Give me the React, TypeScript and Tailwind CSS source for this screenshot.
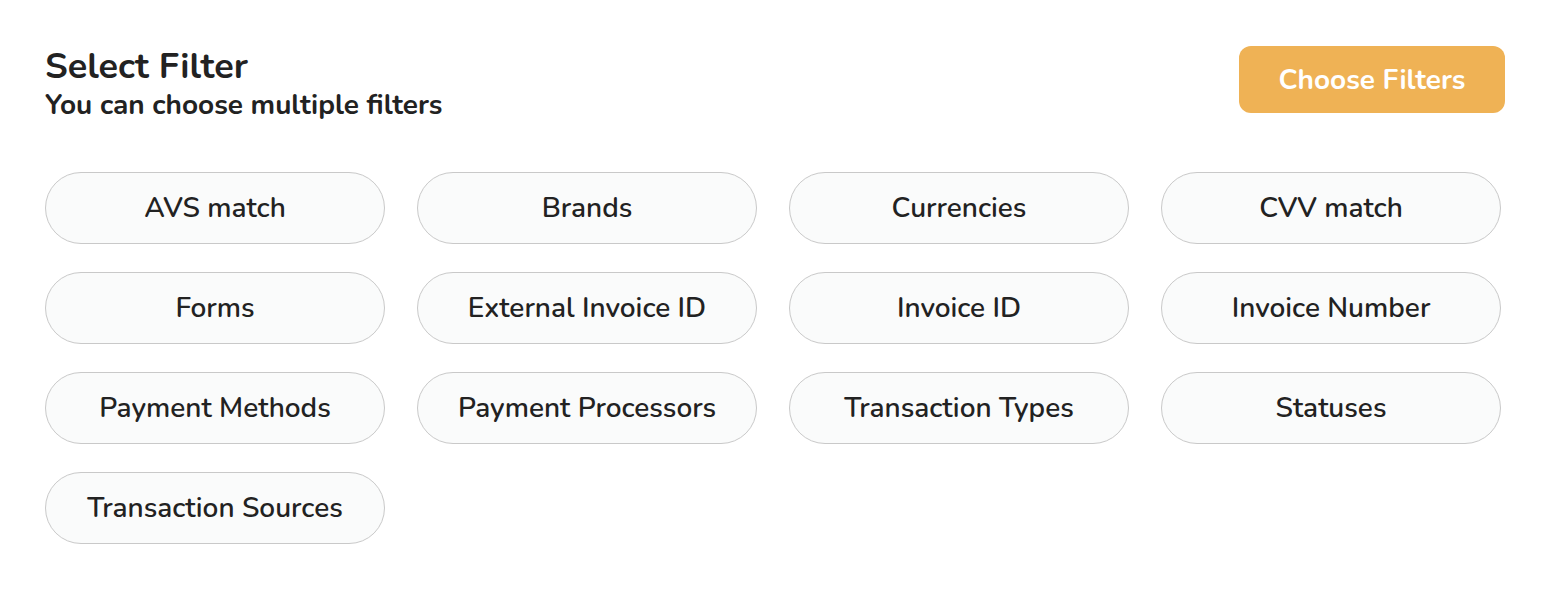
import React from "react";

const filters = [
  "AVS match",
  "Brands",
  "Currencies",
  "CVV match",
  "Forms",
  "External Invoice ID",
  "Invoice ID",
  "Invoice Number",
  "Payment Methods",
  "Payment Processors",
  "Transaction Types",
  "Statuses",
  "Transaction Sources",
];

export default function App() {
  return (
    <div
      className="w-[1552px] h-[592px] bg-white text-[#222222] pl-[45px] pr-[47px] pt-[46px]"
      style={{ fontFamily: "Nunito, Lato, 'Noto Sans', sans-serif" }}
    >
      <div className="flex items-start justify-between">
        <div className="flex flex-col">
          <h1 className="text-[36px] font-bold leading-[42px] text-[#222222]">Select Filter</h1>
          <p className="text-[28px] font-bold leading-[34px] text-[#222222]">You can choose multiple filters</p>
        </div>
        <button className="w-[266px] h-[67px] rounded-[12px] bg-[#efb255] text-white text-[28px] font-bold">
          Choose Filters
        </button>
      </div>
      <div className="mt-[50px] grid grid-cols-[repeat(4,340px)] gap-x-[32px] gap-y-[28px]">
        {filters.map((f) => (
          <div
            key={f}
            className="h-[72px] rounded-full border border-[#c9c9c9] bg-[#fafbfb] flex items-center justify-center text-[28px] font-semibold text-[#222222]"
          >
            {f}
          </div>
        ))}
      </div>
    </div>
  );
}
